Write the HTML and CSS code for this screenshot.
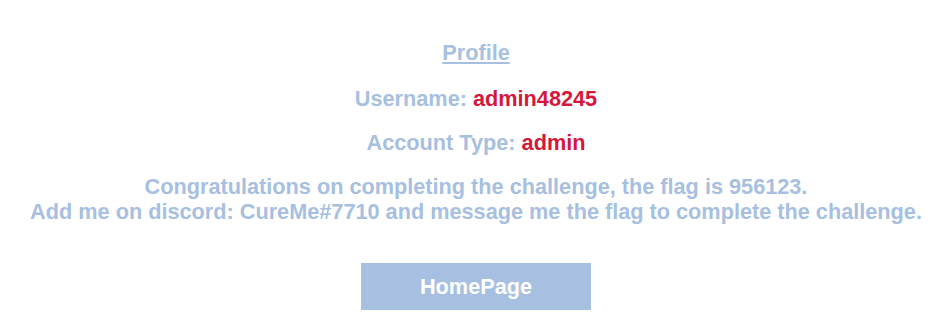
FILE: index.html
```html
<!DOCTYPE html>
<html lang="en">
<head>
  <meta charset="UTF-8" />
  <title>Profile</title>
  <link rel="stylesheet" href="styles.css">
</head>
<body>
  <div class="profile">
    <a class="title" href="#">Profile</a>
    <p class="row">Username: <span class="val">admin48245</span></p>
    <p class="row">Account Type: <span class="val">admin</span></p>
    <p class="msg">Congratulations on completing the challenge, the flag is 956123.<br>Add me on discord: CureMe#7710 and message me the flag to complete the challenge.</p>
    <a class="btn" href="#">HomePage</a>
  </div>
</body>
</html>
```

FILE: styles.css
```css
body { margin: 0; font-family: "Liberation Sans", Arial, sans-serif; background: #fff; }
.profile { display: flex; flex-direction: column; align-items: center; text-align: center; padding-top: 41px; color: #a7bfe0; font-weight: bold; font-size: 21.7px; }
.title { color: #a7bfe0; text-decoration: underline; line-height: 24px; }
.row { margin: 22px 0 0; line-height: 24px; }
.row + .row { margin-top: 20px; }
.val { color: #d6163c; }
.msg { margin: 19px 0 0; line-height: 25px; }
.btn { margin-top: 39px; width: 230px; height: 47px; line-height: 47px; background: #a7bfe0; color: #fff; text-decoration: none; }
```
